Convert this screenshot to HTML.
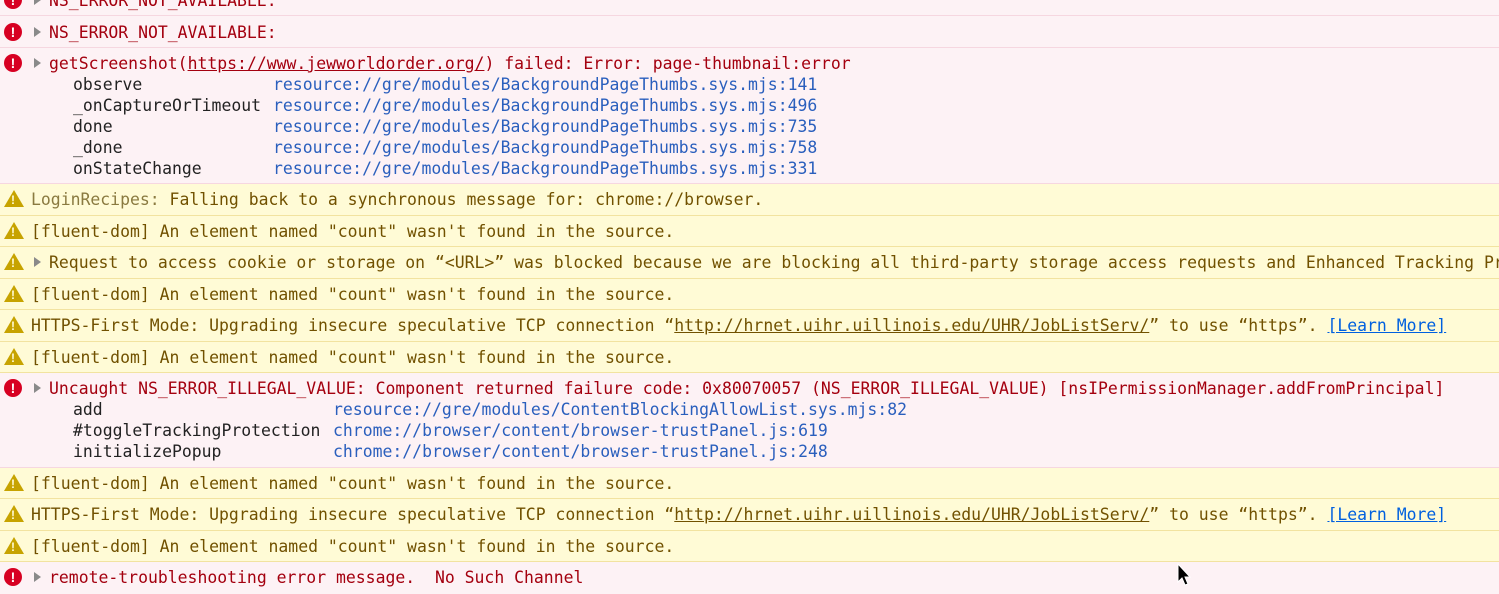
<!DOCTYPE html>
<html><head><meta charset="utf-8"><style>
body{margin:0;width:1499px;height:586px;overflow:hidden;background:#fff;font-family:"DejaVu Sans Mono","Liberation Mono",monospace;font-size:16.45px;}
.r{position:absolute;left:0;width:1499px;white-space:pre;overflow:hidden;box-sizing:border-box}
.e{background:#fdf2f5;border-bottom:1px solid #f6d7e0;color:#a4000f}
.w{background:#fffbd6;border-bottom:1px solid #f2e3a0;color:#715100}
.t{position:absolute;left:49px;line-height:21px}
.w .t{left:31px}
.ic{position:absolute;left:4px;width:18px;height:18px;border-radius:50%;background:#d70022;color:#fff;font:bold 14px/18px "Liberation Sans",sans-serif;text-align:center}
.tri{position:absolute;left:4px;width:0;height:0;border-left:10px solid transparent;border-right:10px solid transparent;border-bottom:17px solid #c7a300}
.tri:after{content:"!";position:absolute;left:-3px;top:3px;color:#fffbd6;font:bold 12px/14px "Liberation Sans",sans-serif}
.ar{position:absolute;left:34px;width:0;height:0;border-top:5px solid transparent;border-bottom:5px solid transparent;border-left:7px solid #8a8a8a}
.s{position:absolute;left:73px;color:#222;line-height:21px}
.l{position:absolute;color:#2a5fbd;line-height:21px}
u{text-decoration:underline}
a{color:#0060df;text-decoration:underline}
</style></head><body>

<div class="r e" style="top:-16px;height:32px"><span class="ic" style="top:7px">!</span><span class="ar" style="top:11px"></span><span class="t" style="top:6px">NS_ERROR_NOT_AVAILABLE:</span></div>
<div class="r e" style="top:16px;height:32px"><span class="ic" style="top:7px">!</span><span class="ar" style="top:11px"></span><span class="t" style="top:6px">NS_ERROR_NOT_AVAILABLE:</span></div>
<div class="r e" style="top:48px;height:136px"><span class="ic" style="top:6px">!</span><span class="ar" style="top:10px"></span><span class="t" style="top:5px">getScreenshot(<u>https://www.jewworldorder.org/</u>) failed: Error: page-thumbnail:error</span>
<span class="s" style="top:26px">observe
_onCaptureOrTimeout
done
_done
onStateChange</span>
<span class="l" style="left:273px;top:26px">resource://gre/modules/BackgroundPageThumbs.sys.mjs:141
resource://gre/modules/BackgroundPageThumbs.sys.mjs:496
resource://gre/modules/BackgroundPageThumbs.sys.mjs:735
resource://gre/modules/BackgroundPageThumbs.sys.mjs:758
resource://gre/modules/BackgroundPageThumbs.sys.mjs:331</span></div>

<div class="r w" style="top:184px;height:32px"><span class="tri" style="top:6px"></span><span class="t" style="top:5px"><span style="color:#8a7a40">LoginRecipes:</span> Falling back to a synchronous message for: chrome://browser.</span></div>
<div class="r w" style="top:216px;height:31px"><span class="tri" style="top:6px"></span><span class="t" style="top:5px">[fluent-dom] An element named "count" wasn't found in the source.</span></div>
<div class="r w" style="top:247px;height:32px"><span class="tri" style="top:6px"></span><span class="ar" style="top:10px"></span><span class="t" style="left:49px;top:5px">Request to access cookie or storage on “&lt;URL&gt;” was blocked because we are blocking all third-party storage access requests and Enhanced Tracking Protection</span></div>
<div class="r w" style="top:279px;height:31px"><span class="tri" style="top:6px"></span><span class="t" style="top:5px">[fluent-dom] An element named "count" wasn't found in the source.</span></div>
<div class="r w" style="top:310px;height:32px"><span class="tri" style="top:6px"></span><span class="t" style="top:5px">HTTPS-First Mode: Upgrading insecure speculative TCP connection “<u>http://hrnet.uihr.uillinois.edu/UHR/JobListServ/</u>” to use “https”. <a>[Learn More]</a></span></div>
<div class="r w" style="top:342px;height:31px"><span class="tri" style="top:6px"></span><span class="t" style="top:5px">[fluent-dom] An element named "count" wasn't found in the source.</span></div>

<div class="r e" style="top:373px;height:95px"><span class="ic" style="top:6px">!</span><span class="ar" style="top:10px"></span><span class="t" style="top:5px">Uncaught NS_ERROR_ILLEGAL_VALUE: Component returned failure code: 0x80070057 (NS_ERROR_ILLEGAL_VALUE) [nsIPermissionManager.addFromPrincipal]</span>
<span class="s" style="top:26px">add
#toggleTrackingProtection
initializePopup</span>
<span class="l" style="left:333px;top:26px">resource://gre/modules/ContentBlockingAllowList.sys.mjs:82
chrome://browser/content/browser-trustPanel.js:619
chrome://browser/content/browser-trustPanel.js:248</span></div>

<div class="r w" style="top:468px;height:31px"><span class="tri" style="top:6px"></span><span class="t" style="top:5px">[fluent-dom] An element named "count" wasn't found in the source.</span></div>
<div class="r w" style="top:499px;height:32px"><span class="tri" style="top:6px"></span><span class="t" style="top:5px">HTTPS-First Mode: Upgrading insecure speculative TCP connection “<u>http://hrnet.uihr.uillinois.edu/UHR/JobListServ/</u>” to use “https”. <a>[Learn More]</a></span></div>
<div class="r w" style="top:531px;height:31px"><span class="tri" style="top:6px"></span><span class="t" style="top:5px">[fluent-dom] An element named "count" wasn't found in the source.</span></div>
<div class="r e" style="top:562px;height:32px;border:none"><span class="ic" style="top:6px">!</span><span class="ar" style="top:10px"></span><span class="t" style="top:5px">remote-troubleshooting error message.  No Such Channel</span></div>

<svg style="position:absolute;left:1177px;top:563px" width="16" height="24" viewBox="0 0 16 24"><path d="M1 1 L1 19 L5 15 L8 22 L11 21 L8 14 L13 14 Z" fill="#000" stroke="#fff" stroke-width="1"/></svg>
</body></html>
